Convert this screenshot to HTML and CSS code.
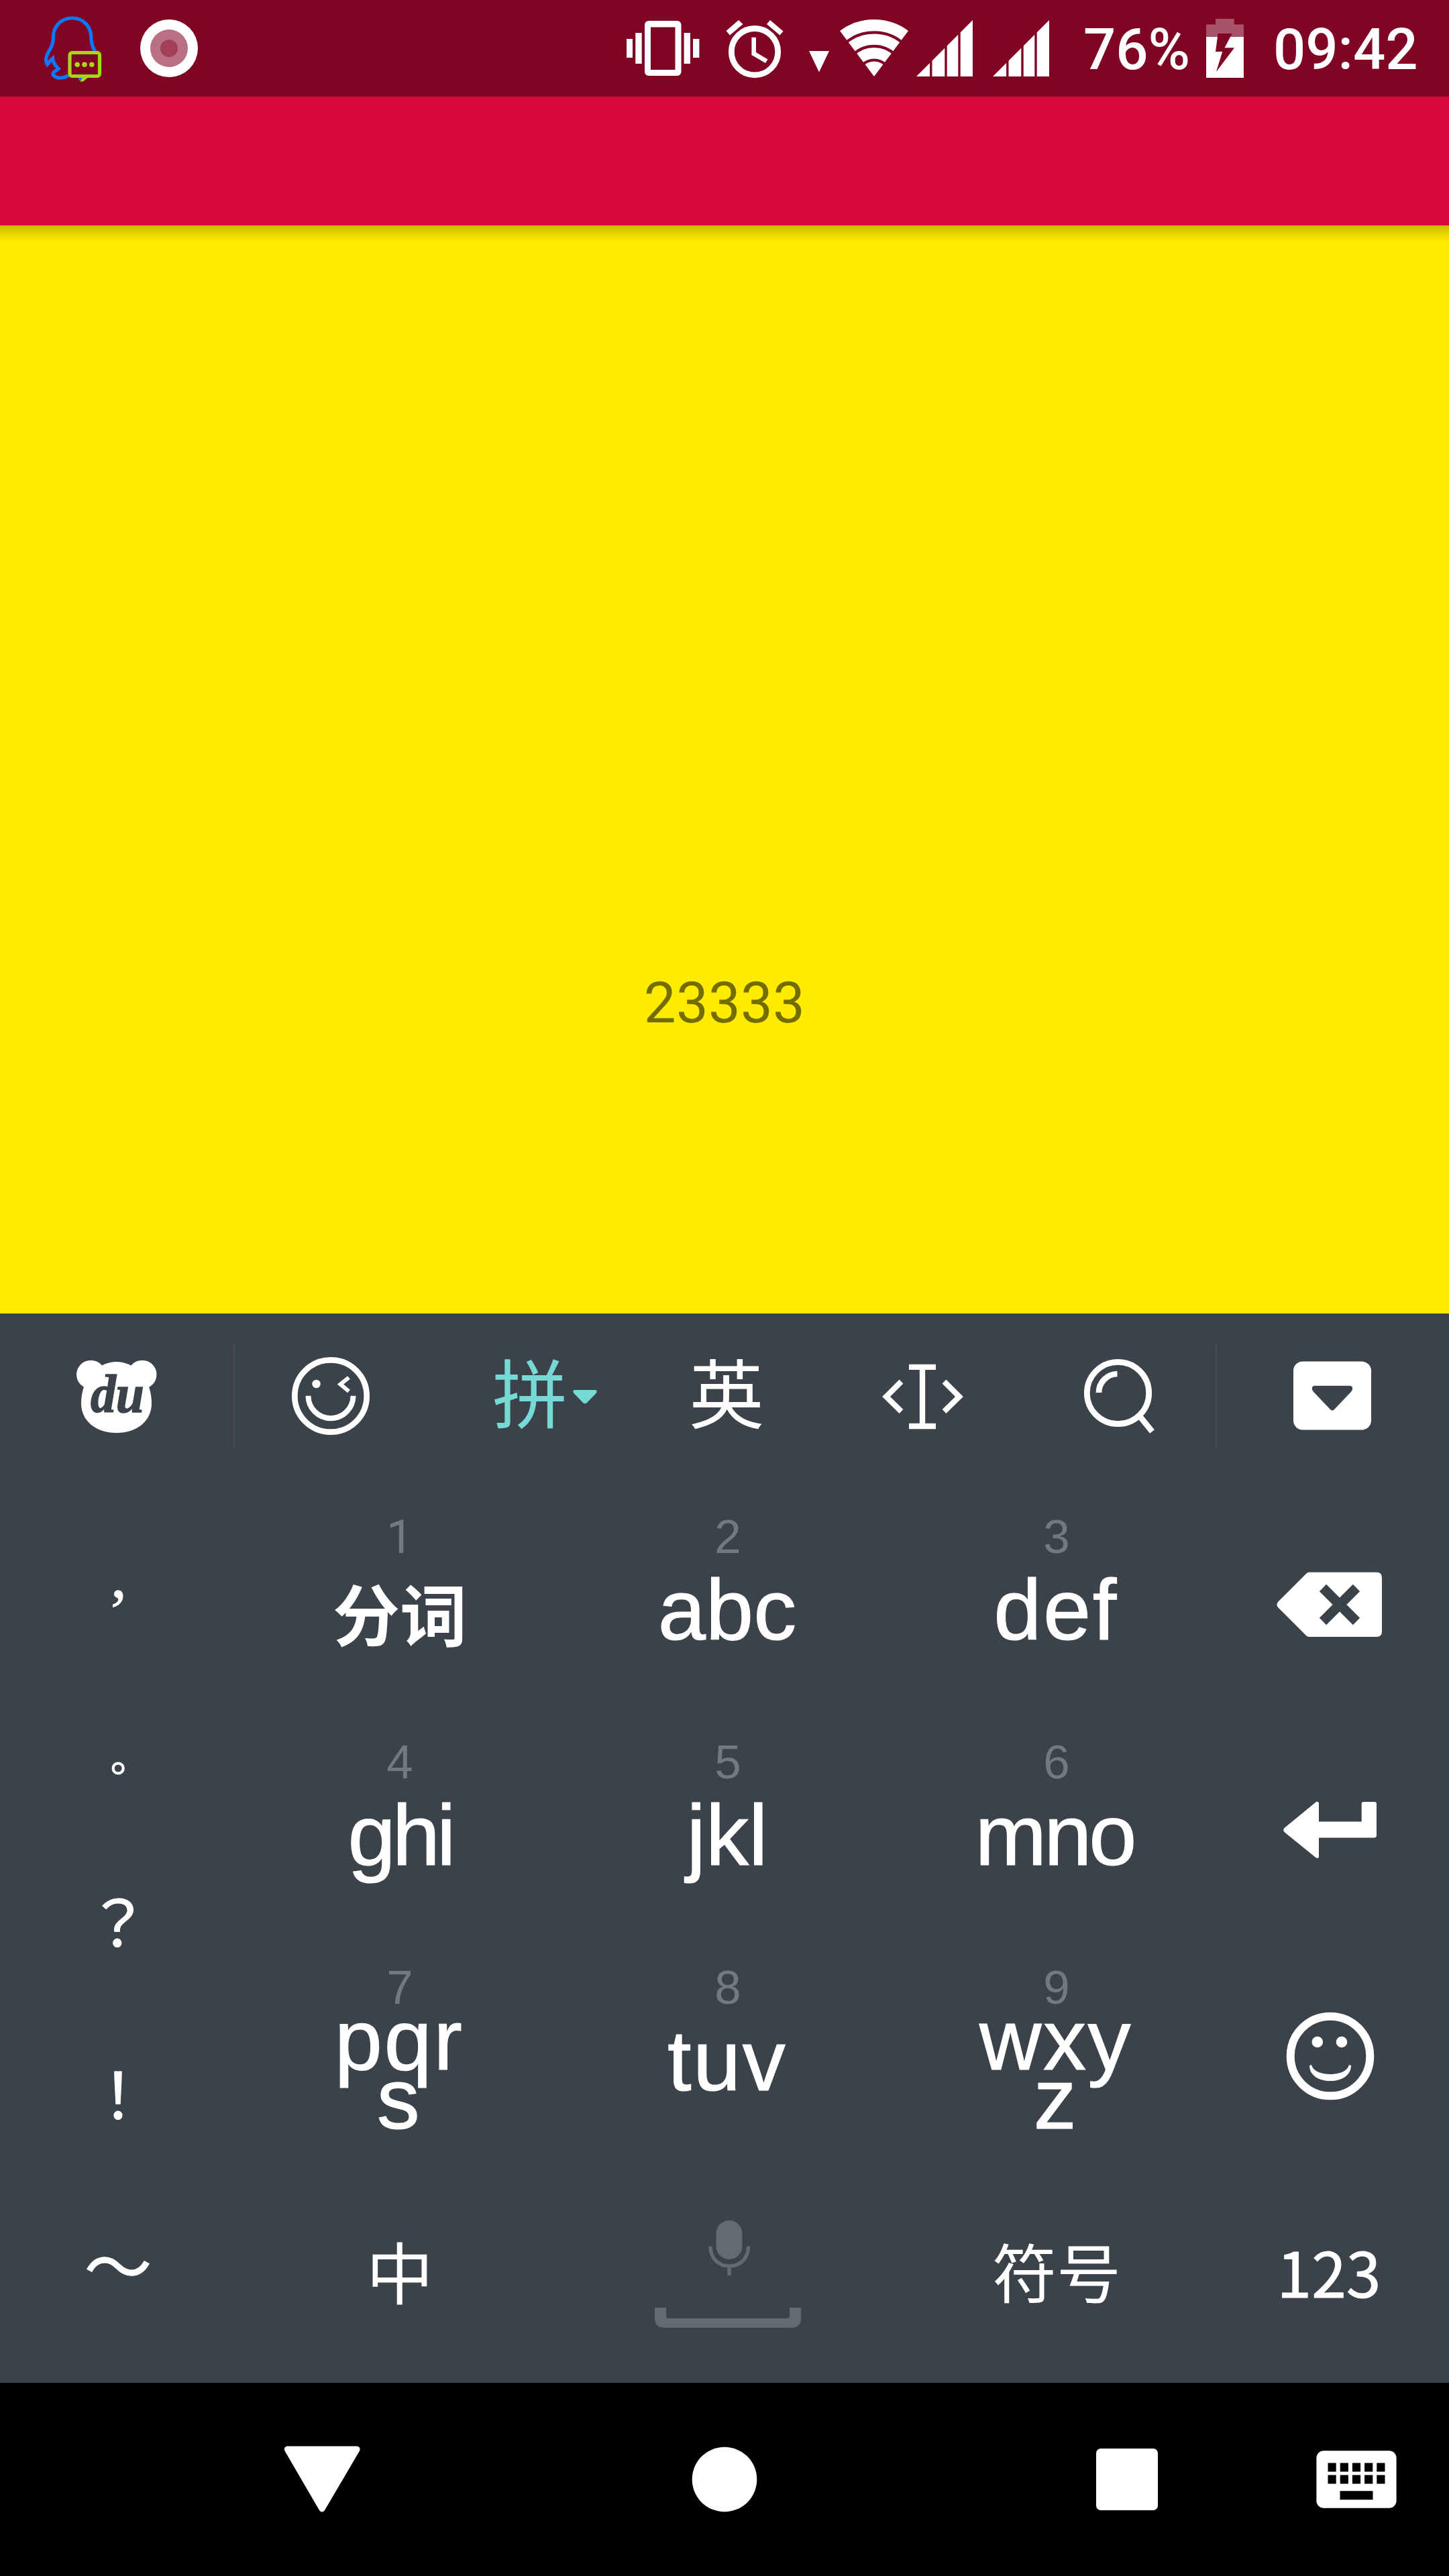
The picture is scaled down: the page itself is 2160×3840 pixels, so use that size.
FILE: index.html
```html
<!DOCTYPE html>
<html lang="zh-CN">
<head>
<meta charset="utf-8">
<title>23333</title>
<link rel="stylesheet" href="styles.css">
</head>
<body>
<div class="screen">
  <header class="status">
    <svg class="st-qq" viewBox="60 0 100 144" width="100" height="144">
      <path d="M142 76C137 71 138 66 136 60C137 40 125 27 107.500 27C90 27 78 41 79.500 58C79 66 76 72 72 78C68 85 67.500 91 70.500 96C74 92 76 89 78.500 87C79 95 84 99 87 102.500C83 106 78 108 79 111C82 117 93 118 102 112.500M117 117.500L123 116" fill="none" stroke="#0a79ff" stroke-width="5.200"/>
      <rect x="104" y="78.500" width="44.500" height="35" rx="3.500" fill="#800423" stroke="#a9d619" stroke-width="5.200"/>
      <path d="M125.500 112L119 121.800L124 121.500L133 114L131 111z" fill="#a9d619"/>
      <g fill="#a9d619"><circle cx="115.200" cy="96.200" r="3.800"/><circle cx="126" cy="96.200" r="3.800"/><circle cx="136.800" cy="96.200" r="3.800"/></g>
    </svg>
    <svg class="st-record" viewBox="208 0 88 144" width="88" height="144">
      <circle cx="252" cy="72" r="43" fill="#fff"/><circle cx="252" cy="72" r="28" fill="#b97082"/><circle cx="252" cy="72" r="13" fill="#a2405a"/>
    </svg>
    <div class="st-right">
      <svg viewBox="930 0 120 144" width="120" height="144" fill="#fff">
        <rect x="934" y="58" width="9" height="28"/><rect x="947.300" y="49" width="9.400" height="46"/>
        <path fill-rule="evenodd" d="M967 31h42.500a6 6 0 0 1 6 6v70a6 6 0 0 1-6 6H967a6 6 0 0 1-6-6V37a6 6 0 0 1 6-6zM970 40.500v63.500h36.500V40.500z"/>
        <rect x="1019.600" y="49" width="9.400" height="46"/><rect x="1033" y="58" width="9.400" height="28"/>
      </svg>
      <svg class="st-alarm" viewBox="1078 0 94 144" width="94" height="144" fill="#fff">
        <circle cx="1125" cy="77.200" r="34.700" fill="none" stroke="#fff" stroke-width="8.800"/>
        <path d="M1082.500 46L1101 30L1107.500 36L1088 52.500zM1143 36L1148 30L1167.500 46.500L1162.500 52.500zM1120.400 55.700H1127V78L1144.500 88.500L1141 94L1120.400 82z"/>
      </svg>
      <svg class="st-wifi" viewBox="1200 0 160 144" width="160" height="144" fill="#fff">
        <path d="M1206 76h30l-15 31.500z"/>
        <path d="M1303 114L1252 46A85 85 0 0 1 1354 46z"/>
        <g fill="none" stroke="#800423" stroke-width="4.200"><circle cx="1303" cy="114" r="65.700"/><circle cx="1303" cy="114" r="45.200"/><circle cx="1303" cy="114" r="24.500"/></g>
      </svg>
      <svg viewBox="1360 0 96 144" width="96" height="144">
        <path d="M1366 114L1450 30V114z" fill="#fff"/><path d="M1387.800 30v86M1410 30v86M1430 30v86" stroke="#800423" stroke-width="3.400"/>
      </svg>
      <svg class="st-sim" viewBox="1360 0 96 144" width="96" height="144">
        <path d="M1366 114L1450 30V114z" fill="#fff"/><path d="M1387.800 30v86M1410 30v86M1430 30v86" stroke="#800423" stroke-width="3.400"/>
      </svg>
      <span class="st-pct">76%</span>
      <svg viewBox="1794 0 64 144" width="64" height="144">
        <path d="M1812 28h27.700v8.500H1854V56h-56V36.500h14z" fill="#a8536a"/><path d="M1798 55h56v61h-56z" fill="#fff"/>
        <path d="M1815.600 50H1836.600L1825.500 71.300H1840L1813 107L1822.300 77H1812z" fill="#800423"/>
      </svg>
      <span class="st-time">09:42</span>
    </div>
  </header>
  <div class="appbar"></div>
  <main class="content"><p class="message">23333</p></main>

  <section class="keyboard">
    <div class="tools">
      <div class="tool">
        <svg viewBox="104 2013 140 140" width="140" height="140">
          <g fill="#fff"><ellipse cx="135.500" cy="2049" rx="21.500" ry="21.300"/><ellipse cx="212" cy="2049" rx="21.500" ry="21.300"/>
          <path d="M173.600 2030C149 2030 121 2052 121 2092C121 2119 144 2136 173.600 2136S226 2119 226 2092C226 2052 198 2030 173.600 2030z"/></g>
          <text class="du" x="135" y="2105" textLength="80" lengthAdjust="spacingAndGlyphs">du</text>
        </svg>
      </div>
      <div class="tool-strip">
        <div class="tool">
          <svg viewBox="423 2013 140 140" width="140" height="140" fill="none" stroke="#fff">
            <circle cx="493" cy="2081" r="53.700" stroke-width="8.700"/><circle cx="471.500" cy="2063" r="6.200" fill="#fff" stroke="none"/>
            <path d="M520 2053.500L507.500 2063.500L520 2074" stroke-width="6"/><path d="M459.500 2080.700a33.500 33.500 0 0 0 67 0" stroke-width="8"/>
          </svg>
        </div>
        <div class="tool active"><span class="tool-text pin">拼</span>
          <svg viewBox="852 2013 36 140" width="36" height="140"><path d="M854.500 2072h31q4 1 1 5L873 2091q-3 2.500-6 0L853.500 2077q-3-4 1-5z" fill="#76d9d6"/></svg>
        </div>
        <div class="tool"><span class="tool-text ying">英</span></div>
        <div class="tool">
          <svg viewBox="1304 2013 140 140" width="140" height="140" fill="none" stroke="#fff" stroke-width="8.300">
            <path d="M1342.500 2059.500L1320 2082L1342.500 2104M1406.500 2059.500L1429 2082L1406.500 2104M1374 2038V2126M1354 2037.900H1394M1354 2126H1394"/>
          </svg>
        </div>
        <div class="tool">
          <svg viewBox="1597 2013 140 140" width="140" height="140" fill="none" stroke="#fff" stroke-width="8.700">
            <circle cx="1666.500" cy="2076.500" r="46.200"/><path d="M1638 2076A28 28 0 0 1 1665.500 2048M1698 2110L1717.500 2134"/>
          </svg>
        </div>
      </div>
      <div class="tool">
        <svg class="hide" viewBox="1916 2013 140 140" width="140" height="140">
          <rect x="1928" y="2029.500" width="116" height="102" rx="14" fill="#fff"/><path d="M1959 2065.700h54q6 2 1 9L1989 2101q-3 3-6 0L1958 2074.700q-5-7 1-9z" fill="#3b4249"/>
        </svg>
      </div>
    </div>

    <div class="pad">
      <div class="side">
        <div class="comma">,</div><div class="stop">。</div><div class="ask">？</div><div>！</div><div class="tilde">～</div>
      </div>
      <div class="keys">
        <div class="key"><span class="num one">1</span><span class="han">分词</span></div>
        <div class="key"><span class="num">2</span><span class="abc">abc</span></div>
        <div class="key"><span class="num">3</span><span class="abc loose">def</span></div>
        <div class="key icon">
          <svg viewBox="1900 2208 166 336" width="166" height="336">
            <path d="M1951 2343.700H2052q8 0 8 8V2432q0 8-8 8H1951q-3 0-5-3L1905 2396q-3-4 0-8L1946 2347q2-3 5-3.300z" fill="#fff"/>
            <path d="M1972 2367L2022 2417M2022 2367L1972 2417" stroke="#3b4249" stroke-width="14.500"/>
          </svg>
        </div>

        <div class="key"><span class="num">4</span><span class="abc tighter">ghi</span></div>
        <div class="key"><span class="num">5</span><span class="abc">jkl</span></div>
        <div class="key"><span class="num">6</span><span class="abc tight">mno</span></div>
        <div class="key icon">
          <svg viewBox="1900 2544 166 336" width="166" height="336">
            <path d="M1962 2686q4-1 4 3V2715.500H2029.700V2689q0-3 3-3H2049q3 0 3 3V2736q0 3.600-4 3.600H1966V2767q0 4-4 2.500L1914.500 2731q-2.500-3 0-6z" fill="#fff"/>
          </svg>
        </div>

        <div class="key"><span class="num">7</span><span class="abc two loose">pqr<br>s</span></div>
        <div class="key"><span class="num">8</span><span class="abc loose">tuv</span></div>
        <div class="key"><span class="num">9</span><span class="abc two loose">wxy<br>z</span></div>
        <div class="key icon">
          <svg viewBox="1900 2880 166 336" width="166" height="336">
            <circle cx="1983" cy="3065" r="59.300" fill="none" stroke="#fff" stroke-width="12"/>
            <g fill="#fff"><circle cx="1963.800" cy="3044" r="8.300"/><circle cx="2000" cy="3044" r="8.300"/>
            <path d="M1952 3079C1952 3094 1966 3102 1983 3102S2014 3094 2014 3079L2011 3078C2009 3087 1997 3092 1983 3092S1957 3087 1955 3078z"/></g>
          </svg>
        </div>

        <div class="key mid"><span class="zhong">中</span></div>
        <div class="key">
          <svg viewBox="970 3216 230 336" width="230" height="336" fill="#636a71">
            <rect x="1067.500" y="3310" width="39" height="58" rx="19.500"/>
            <path d="M1059 3348.500C1059 3388 1115.500 3388 1115.500 3348.500M1087 3376V3392" fill="none" stroke="#636a71" stroke-width="5.400"/>
            <path d="M976 3440h17v12q0 4 4 4h176q4 0 4-4v-12h17.300v15q0 15-15 15H991q-15 0-15-15z"/>
          </svg>
        </div>
        <div class="key mid"><span class="fuhao">符号</span></div>
        <div class="key mid icon"><span class="n123">123</span></div>
      </div>
    </div>
  </section>

  <nav class="navbar">
    <svg viewBox="410 3552 140 288" width="140" height="288" fill="#fff"><path d="M428 3646.500h104q6 1 4 7L484 3742q-4 5-8 0L424.500 3653.500q-2-6 3.500-7z"/></svg>
    <svg viewBox="1010 3552 140 288" width="140" height="288" fill="#fff"><circle cx="1080" cy="3696" r="48.300"/></svg>
    <svg viewBox="1610 3552 140 288" width="140" height="288" fill="#fff"><rect x="1634" y="3650" width="92" height="92" rx="7"/></svg>
    <svg class="nav-ime" viewBox="1952 3552 140 288" width="140" height="288">
      <rect x="1962.400" y="3653.300" width="119.200" height="85.400" rx="11" fill="#fff"/>
      <path d="M1979.500 3678h85M1979.500 3696h85" stroke="#000" stroke-width="12.800" stroke-dasharray="12.200 6"/>
      <path d="M1997.500 3713.300h49v13h-49z"/>
    </svg>
  </nav>
</div>
</body>
</html>
```
FILE: styles.css
```css
* { box-sizing: border-box; margin: 0; padding: 0; }
body { background: #000; }
svg { display: block; flex: none; }

.screen {
  width: 2160px;
  height: 3840px;
  display: flex;
  flex-direction: column;
  overflow: hidden;
  color: #fff;
  font-family: Roboto, "Noto Sans CJK SC", sans-serif;
}

/* status bar */
.status {
  height: 144px;
  display: flex;
  align-items: center;
  background: #800423;
  padding: 0 48px 0 60px;
}
.st-record { margin-left: 48px; }
.st-right {
  display: flex;
  align-items: center;
  margin-left: auto;
  font-size: 85px;
  font-weight: 500;
  line-height: 144px;
}
.st-alarm { margin-left: 28px; }
.st-wifi { margin-left: 28px; }
.st-sim { margin-left: 18px; }
.st-pct { width: 224px; padding: 3px 0 0 45px; }
.st-time { width: 254px; padding: 3px 0 0 40px; }

.appbar { height: 192px; background: #d9083a; }

.content {
  height: 1622px;
  background: linear-gradient(rgba(0, 0, 0, .21), rgba(0, 0, 0, .08) 14px, transparent 26px) #ffeb00;
  text-align: center;
  padding-top: 1109px;
}
.message {
  font-size: 85px;
  line-height: 100px;
  letter-spacing: .3px;
  color: #756c00;
}

/* keyboard */
.keyboard { height: 1594px; background: #3b4249; }
.tools {
  height: 250px;
  display: grid;
  grid-template-columns: 348px 1466px 346px;
}
.tool { display: flex; align-items: center; justify-content: center; }
.hide { margin-right: 2px; }
.tool-strip {
  display: grid;
  grid-template-columns: 290px 348px 194px 390px 194px;
  background:
    linear-gradient(#4d4c50, #4d4c50) 0 45px / 2px 157px no-repeat,
    linear-gradient(#4d4c50, #4d4c50) 100% 45px / 2px 157px no-repeat;
}
.tool-text {
  font-family: "Noto Sans CJK SC", sans-serif;
  line-height: 140px;
}
.pin { font-size: 112px; margin-right: 8px; margin-top: -23px; }
.ying { font-size: 112px; margin-top: -23px; }
.active { color: #76d9d6; }
.du {
  font: italic bold 80px "Liberation Serif", serif;
  fill: #3b4249;
  stroke: #3b4249;
  stroke-width: 1.5px;
}

.pad { display: grid; grid-template-columns: 352px 1808px; }
.side {
  display: flex;
  flex-direction: column;
  padding-top: 28px;
  text-align: center;
  font: 94px/252px "Noto Sans CJK TC", sans-serif;
  -webkit-text-stroke: 1px #fff;
}
.side div { height: 252px; }
.side .comma {
  font-family: "Liberation Serif", serif;
  font-size: 96px;
  line-height: 226px;
  padding-left: 2px;
}
.side .stop { font-size: 60px; line-height: 290px; }
.side .ask { line-height: 242px; }
.side .tilde { font-size: 101px; line-height: 258px; }

.keys {
  display: grid;
  grid-template-columns: 488px 490px 490px 340px;
  grid-auto-rows: 336px;
}
.key { display: flex; flex-direction: column; align-items: center; }
.key.icon { padding-right: 14px; }
.num {
  font: 71px/71px "Liberation Sans", sans-serif;
  color: #717a7d;
  margin-top: 47px;
}
.one { font-family: Roboto, sans-serif; }
.abc {
  font: 128px/128px "Liberation Sans", sans-serif;
  margin-top: 10px;
  margin-right: 2px;
  text-align: center;
  -webkit-text-stroke: 1.2px #fff;
}
.loose { letter-spacing: 2.5px; }
.tight { letter-spacing: -4px; margin-right: 6px; }
.tighter { letter-spacing: -5px; margin-right: -1px; }
.two { line-height: 88px; margin-top: -1px; }
.han {
  font: bold 100px/128px "Noto Sans CJK SC", sans-serif;
  margin-top: 13px;
}
.mid { justify-content: center; font-family: "Noto Sans CJK SC", sans-serif; line-height: 128px; }
.zhong { font-size: 100px; }
.fuhao { font-size: 96px; }
.n123 {
  font-size: 93px;
  margin-right: 4px;
  padding-top: 2px;
  -webkit-text-stroke: 1px #fff;
}

/* navigation bar */
.navbar {
  height: 288px;
  display: flex;
  background: #000;
  padding: 0 68px 0 410px;
  gap: 460px;
}
.nav-ime { margin-left: -258px; }
```
